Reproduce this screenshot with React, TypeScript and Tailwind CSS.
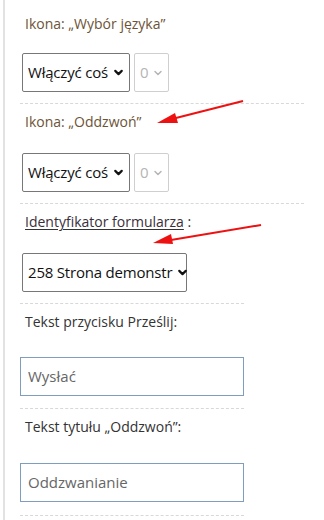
import { ChevronDown } from 'lucide-react'

const font = { fontFamily: '"Open Sans", "Liberation Sans", sans-serif' }

function FakeSelect({ value, width, muted }: { value: string; width: string; muted?: boolean }) {
  return (
    <div
      className={`flex h-[39px] items-center justify-between rounded-[2px] border pl-[5px] pr-[5px] ${width} ${
        muted ? 'border-[#cfcfcf] text-[#b5b5b5]' : 'border-[#777] text-[#111]'
      }`}
    >
      <span className="whitespace-nowrap text-[15px] tracking-[-0.2px]">{value}</span>
      <ChevronDown size={muted ? 12 : 13} strokeWidth={muted ? 3 : 4} className="ml-[4px] shrink-0" />
    </div>
  )
}

function Divider({ width }: { width: string }) {
  return <div className={`border-t border-dashed border-[#d8d8d8] ${width}`} />
}

function TextInput({ value }: { value: string }) {
  return (
    <div className="flex h-[39px] w-[224px] items-center border border-[#7f9dbd] pl-[7px] text-[15px] text-[#666]">
      {value}
    </div>
  )
}

export default function App() {
  return (
    <div className="relative h-[520px] w-[324px] overflow-hidden bg-white" style={font}>
      <div className="absolute left-[3px] top-0 h-full w-[2px] bg-[#e2e2e2]" />
      <div className="flex flex-col pl-[20px]">
        <div className="mt-[14px] mb-[19px] pl-[5px] text-[14px] leading-[20px] text-[#6d5436]">
          Ikona: „Wybór języka”
        </div>
        <div className="flex gap-[4px] pl-[2px] mb-[11px]">
          <FakeSelect value="Włączyć coś" width="w-[108px]" />
          <FakeSelect value="0" width="w-[35px]" muted />
        </div>
        <Divider width="w-[284px]" />

        <div className="mt-[8px] mb-[21px] pl-[5px] text-[14px] leading-[20px] text-[#6d5436]">
          Ikona: „Oddzwoń”
        </div>
        <div className="flex gap-[4px] pl-[2px] mb-[11px]">
          <FakeSelect value="Włączyć coś" width="w-[108px]" />
          <FakeSelect value="0" width="w-[35px]" muted />
        </div>
        <Divider width="w-[284px]" />

        <div className="mt-[8px] mb-[21px] pl-[5px] text-[14px] leading-[20px] text-[#333]">
          <span className="text-[#3a2f3a] underline decoration-[#333] underline-offset-2">
            Identyfikator formularza
          </span>{' '}
          :
        </div>
        <div className="flex pl-[2px] mb-[11px]">
          <FakeSelect value="258 Strona demonstr" width="w-[165px]" />
        </div>
        <Divider width="w-[224px]" />

        <div className="mt-[8px] mb-[25px] pl-[5px] text-[14px] leading-[20px] text-[#333]">
          Tekst przycisku Prześlij:
        </div>
        <TextInput value="Wysłać" />
        <div className="mt-[12px]">
          <Divider width="w-[224px]" />
        </div>

        <div className="mt-[8px] mb-[26px] pl-[5px] text-[14px] leading-[20px] text-[#333]">
          Tekst tytułu „Oddzwoń”:
        </div>
        <TextInput value="Oddzwanianie" />
        <div className="mt-[13px]">
          <Divider width="w-[224px]" />
        </div>
      </div>

      <svg className="pointer-events-none absolute left-0 top-0" width="324" height="520">
        <line x1="243" y1="101" x2="168" y2="120" stroke="#ee1111" strokeWidth="2" />
        <path d="M157,123 L175,113 L178,123 Z" fill="#ee1111" />
        <line x1="261" y1="225" x2="165" y2="241" stroke="#ee1111" strokeWidth="2" />
        <path d="M153,243 L171,234 L173,244 Z" fill="#ee1111" />
      </svg>
    </div>
  )
}
